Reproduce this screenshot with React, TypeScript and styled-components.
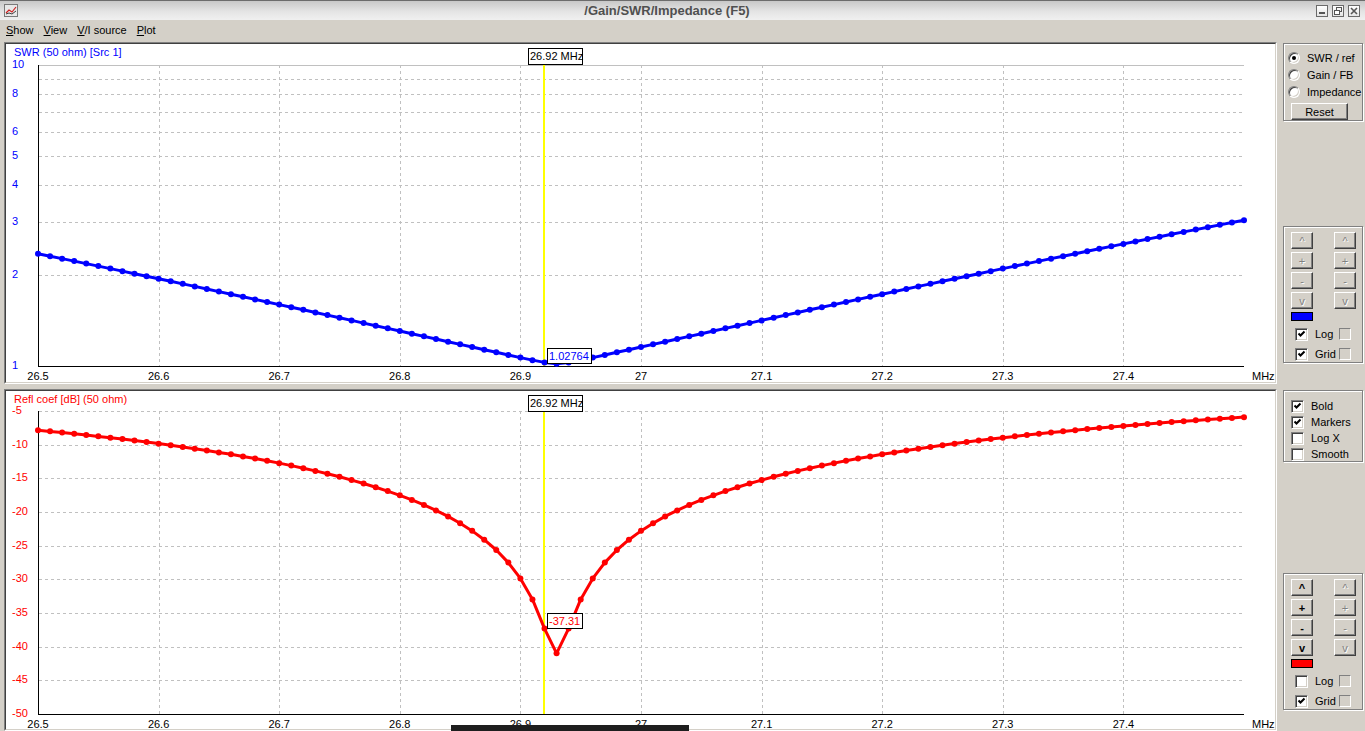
import React from 'react';
import styled, { createGlobalStyle } from 'styled-components';

const GlobalStyle = createGlobalStyle`
  html, body { margin: 0; padding: 0; background: #d4d0c8; }
  body { font-family: "Liberation Sans", Arial, sans-serif; font-size: 11px; overflow: hidden; }
  #root { width: 1365px; height: 731px; }
`;

const FONT = '"Liberation Sans", Arial, sans-serif';

/* ---------- data ---------- */
const PLOT_L = 38;
const PLOT_R = 1244;
const PX_PER_MHZ = 1206;
const xOf = (f: number) => PLOT_L + (f - 26.5) * PX_PER_MHZ;
const ySwr = (s: number) => 366 - 301 * Math.log10(s);
const yDb = (d: number) => 411 + (-5 - d) * (303 / 45);

const freqs = Array.from({ length: 101 }, (_, i) => 26.5 + i * 0.01);
const gammaOf = (f: number) => {
  const R = 50.9;
  const X = 103.9 * (f - 26.93);
  return Math.sqrt(((R - 50) ** 2 + X * X) / ((R + 50) ** 2 + X * X));
};
const swrPts = freqs.map((f) => {
  const g = gammaOf(f);
  return [xOf(f), ySwr((1 + g) / (1 - g))] as [number, number];
});
const dbPts = freqs.map((f) => [xOf(f), yDb(20 * Math.log10(gammaOf(f)))] as [number, number]);

const xTickLabels = ['26.5', '26.6', '26.7', '26.8', '26.9', '27', '27.1', '27.2', '27.3', '27.4'];
const xTickPos = xTickLabels.map((_, k) => PLOT_L + k * 120.6);

/* ---------- window chrome ---------- */
const Window = styled.div`
  width: 1365px;
  height: 731px;
  background: #d4d0c8;
  position: relative;
  overflow: hidden;
  display: flex;
  flex-direction: column;
`;

const TitleBar = styled.div`
  box-sizing: border-box;
  height: 20px;
  border-top: 1px solid #6c6c6c;
  background: linear-gradient(#c8c8c8, #e4e4e4 55%, #f0f0f0);
  display: flex;
  align-items: center;
  padding: 0 5px 0 4px;
`;

const TitleText = styled.div`
  flex: 1;
  text-align: center;
  font: bold 13px ${FONT};
  color: #505050;
`;

const WinButtons = styled.div`
  display: flex;
  gap: 4px;
`;

const WinButton = styled.div`
  box-sizing: border-box;
  width: 12px;
  height: 12px;
  border: 1px solid #6a6a6a;
  background: linear-gradient(#ffffff, #e4e4e4);
  display: flex;
  align-items: center;
  justify-content: center;
`;

const MenuBar = styled.div`
  height: 20px;
  display: flex;
  align-items: center;
  padding-left: 1px;
`;

const MenuItem = styled.div`
  padding: 0 5px;
  font: 11px ${FONT};
  color: #000;
  u { text-decoration: underline; }
`;

const Main = styled.div`
  display: flex;
  gap: 6px;
  padding: 2px 0 0 4px;
`;

const LeftCol = styled.div`
  display: flex;
  flex-direction: column;
  gap: 5px;
`;

const PanelFrame = styled.div`
  box-sizing: border-box;
  width: 1273px;
  height: 342px;
  border: 1px solid;
  border-color: #808080 #ffffff #ffffff #808080;
`;

const PanelInner = styled.div`
  box-sizing: border-box;
  width: 100%;
  height: 100%;
  border: 1px solid;
  border-color: #404040 #d4d0c8 #d4d0c8 #404040;
  background: #ffffff;
  display: flex;
`;

const RightCol = styled.div`
  width: 80px;
  display: flex;
  flex-direction: column;
`;

const Group = styled.div<{ $mt: number; $h: number }>`
  box-sizing: border-box;
  width: 80px;
  height: ${(p) => p.$h}px;
  margin-top: ${(p) => p.$mt}px;
  border: 1px solid #808080;
  box-shadow: inset 1px 1px 0 #ffffff, 1px 1px 0 #ffffff;
`;

const RadioList = styled.div`
  display: flex;
  flex-direction: column;
  padding: 5px 0 0 4px;
`;

const RadioRow = styled.div`
  height: 17px;
  display: flex;
  align-items: center;
  gap: 7px;
  font: 11px ${FONT};
`;

const RadioDot = styled.span<{ $on?: boolean }>`
  box-sizing: border-box;
  width: 12px;
  height: 12px;
  border-radius: 50%;
  border: 1px solid;
  border-color: #808080 #ffffff #ffffff #808080;
  box-shadow: inset 1px 1px 0 #404040, inset -1px -1px 0 #d4d0c8;
  background: #ffffff;
  display: flex;
  align-items: center;
  justify-content: center;
  &::after {
    content: '';
    width: 4px;
    height: 4px;
    border-radius: 50%;
    background: ${(p) => (p.$on ? '#000' : 'transparent')};
  }
`;

const PushButton = styled.div`
  box-sizing: border-box;
  width: 57px;
  height: 17px;
  margin: 3px 0 0 7px;
  border: 1px solid;
  border-color: #ffffff #404040 #404040 #ffffff;
  box-shadow: inset -1px -1px 0 #808080;
  display: flex;
  align-items: center;
  justify-content: center;
  font: 11px ${FONT};
`;

const ButtonGrid = styled.div`
  display: grid;
  grid-template-columns: 22px 22px;
  column-gap: 21px;
  row-gap: 3px;
  padding: 5px 0 0 7px;
`;

const CtlButton = styled.div<{ $off?: boolean }>`
  box-sizing: border-box;
  width: 22px;
  height: 17px;
  border: 1px solid;
  border-color: #ffffff #404040 #404040 #ffffff;
  box-shadow: inset -1px -1px 0 #808080;
  display: flex;
  align-items: center;
  justify-content: center;
  font: ${(p) => (p.$off ? 'normal' : 'bold')} 11px ${FONT};
  color: ${(p) => (p.$off ? '#808080' : '#000')};
  text-shadow: ${(p) => (p.$off ? '1px 1px 0 #ffffff' : 'none')};
`;

const Swatch = styled.div<{ $c: string }>`
  box-sizing: border-box;
  width: 22px;
  height: 9px;
  margin: 3px 0 0 7px;
  border: 1px solid #000;
  background: ${(p) => p.$c};
`;

const CheckRows = styled.div<{ $pt: number; $pl: number; $h: number }>`
  display: flex;
  flex-direction: column;
  padding: ${(p) => p.$pt}px 0 0 ${(p) => p.$pl}px;
  & > div { height: ${(p) => p.$h}px; }
`;

const CheckRow = styled.div`
  display: flex;
  align-items: center;
  font: 11px ${FONT};
  position: relative;
`;

const Label = styled.span`
  margin-left: 7px;
`;

const BoxWrap = styled.span<{ $off?: boolean }>`
  box-sizing: border-box;
  width: 13px;
  height: 13px;
  border: 1px solid;
  border-color: #808080 #ffffff #ffffff #808080;
  box-shadow: ${(p) => (p.$off ? 'none' : 'inset 1px 1px 0 #404040, inset -1px -1px 0 #d4d0c8')};
  background: ${(p) => (p.$off ? '#d4d0c8' : '#ffffff')};
  display: flex;
  align-items: center;
  justify-content: center;
`;

const SideBox = styled(BoxWrap)`
  position: absolute;
  left: 44px;
  width: 12px;
  height: 12px;
`;

const Check = ({ on, off }: { on?: boolean; off?: boolean }) => (
  <BoxWrap $off={off}>
    {on && (
      <svg width="9" height="9" viewBox="0 0 9 9">
        <path d="M1.5 3.5 L3.5 5.5 L7.5 1.5" fill="none" stroke="#000" strokeWidth="2" />
      </svg>
    )}
  </BoxWrap>
);

const BottomBar = styled.div`
  position: absolute;
  left: 451px;
  top: 725px;
  width: 238px;
  height: 6px;
  background: #1e1e1e;
`;

/* ---------- chart ---------- */
type ChartProps = {
  innerTop: number;
  plotTop: number;
  plotBottom: number;
  title: string;
  titleY: number;
  color: string;
  hGrid: number[];
  yLabels: { y: number; t: string }[];
  pts: [number, number][];
  topSolid: boolean;
  freqBoxY: number;
  value: { x: number; y: number; w: number; t: string };
};

const Chart = (p: ChartProps) => {
  const line = p.pts.map(([x, y]) => `${x.toFixed(1)},${y.toFixed(1)}`).join(' ');
  const markerX = 544;
  return (
    <svg width="1269" height="338" viewBox={`6 ${p.innerTop} 1269 338`} style={{ display: 'block' }}>
      <g fontFamily={FONT} fontSize="11">
        <text x="14" y={p.titleY} fill={p.color}>{p.title}</text>
        {p.topSolid && (
          <line x1={PLOT_L} x2={PLOT_R} y1={p.plotTop + 0.5} y2={p.plotTop + 0.5} stroke="#c0c0c0" />
        )}
        {xTickPos.slice(1).map((x) => (
          <line key={x} x1={Math.round(x) + 0.5} x2={Math.round(x) + 0.5} y1={p.plotTop} y2={p.plotBottom}
            stroke="#c0c0c0" strokeDasharray="3 3" />
        ))}
        {p.hGrid.map((y) => (
          <line key={y} x1={PLOT_L + 1} x2={PLOT_R} y1={Math.round(y) + 0.5} y2={Math.round(y) + 0.5}
            stroke="#c0c0c0" strokeDasharray="3 3" />
        ))}
        <line x1={PLOT_L + 0.5} x2={PLOT_L + 0.5} y1={p.plotTop} y2={p.plotBottom + 1} stroke="#000" />
        <line x1={PLOT_L} x2={PLOT_R} y1={p.plotBottom + 0.5} y2={p.plotBottom + 0.5} stroke="#000" />
        {p.yLabels.map((l) => (
          <text key={l.t} x="12" y={l.y + 3} fill={p.color}>{l.t}</text>
        ))}
        {xTickLabels.map((t, k) => (
          <text key={t} x={xTickPos[k]} y={p.plotBottom + 14} textAnchor="middle" fill="#000">{t}</text>
        ))}
        <text x="1252" y={p.plotBottom + 14} fill="#000">MHz</text>

        <rect x={markerX - 1} y={p.freqBoxY + 16} width="2" height={p.plotBottom - p.freqBoxY - 16} fill="#ffff00" />

        <polyline points={line} fill="none" stroke={p.color} strokeWidth="3" strokeLinejoin="round" />
        {p.pts.map(([x, y], i) => (
          <circle key={i} cx={x} cy={y} r="3" fill={p.color} />
        ))}

        <rect x="528.5" y={p.freqBoxY + 0.5} width="54" height="16" fill="#fff" stroke="#000" />
        <text x="530" y={p.freqBoxY + 12} fill="#000">26.92 MHz</text>

        <rect x={p.value.x + 0.5} y={p.value.y + 0.5} width={p.value.w} height="15" fill="#fff" stroke="#000" />
        <text x={p.value.x + 2} y={p.value.y + 12} fill={p.color}>{p.value.t}</text>
      </g>
    </svg>
  );
};

const swrGrid = [2, 3, 4, 5, 6, 7, 8, 9].map(ySwr);
const swrLabels = [10, 8, 6, 5, 4, 3, 2, 1].map((v) => ({ y: ySwr(v), t: String(v) }));
const dbGrid = [-5, -10, -15, -20, -25, -30, -35, -40, -45].map(yDb);
const dbLabels = [-5, -10, -15, -20, -25, -30, -35, -40, -45, -50].map((v) => ({ y: yDb(v), t: String(v) }));

const CtlGroup = ({ mt, color, enabledLeft, logOn }: { mt: number; color: string; enabledLeft: boolean; logOn: boolean }) => (
  <Group $mt={mt} $h={137}>
    <ButtonGrid>
      {['^', '+', '-', 'v'].map((g) => (
        <React.Fragment key={g}>
          <CtlButton $off={!enabledLeft}>{g}</CtlButton>
          <CtlButton $off>{g}</CtlButton>
        </React.Fragment>
      ))}
    </ButtonGrid>
    <Swatch $c={color} />
    <CheckRows $pt={3} $pl={11} $h={20}>
      <CheckRow>
        <Check on={logOn} />
        <Label>Log</Label>
        <SideBox $off />
      </CheckRow>
      <CheckRow>
        <Check on />
        <Label>Grid</Label>
        <SideBox $off />
      </CheckRow>
    </CheckRows>
  </Group>
);

export default function App() {
  return (
    <Window>
      <GlobalStyle />
      <TitleBar>
        <svg width="14" height="13" viewBox="0 0 14 13">
          <rect x="0.5" y="0.5" width="13" height="12" fill="#e8e8e8" stroke="#7a7a7a" />
          <polyline points="2,9 5,6 8,8 12,3" fill="none" stroke="#d02020" strokeWidth="1.2" />
          <polyline points="2,10 5,9 8,10 12,7" fill="none" stroke="#404040" strokeWidth="1" />
        </svg>
        <TitleText>/Gain/SWR/Impedance (F5)</TitleText>
        <WinButtons>
          <WinButton>
            <svg width="8" height="8" viewBox="0 0 8 8"><rect x="1" y="5" width="6" height="2" fill="#555" /></svg>
          </WinButton>
          <WinButton>
            <svg width="8" height="8" viewBox="0 0 8 8">
              <rect x="2.5" y="0.5" width="5" height="4" fill="none" stroke="#555" />
              <rect x="0.5" y="3.5" width="5" height="4" fill="#fff" stroke="#555" />
            </svg>
          </WinButton>
          <WinButton>
            <svg width="8" height="8" viewBox="0 0 8 8">
              <path d="M1 1 L7 7 M7 1 L1 7" stroke="#555" strokeWidth="1.6" />
            </svg>
          </WinButton>
        </WinButtons>
      </TitleBar>
      <MenuBar>
        <MenuItem><u>S</u>how</MenuItem>
        <MenuItem><u>V</u>iew</MenuItem>
        <MenuItem><u>V</u>/I source</MenuItem>
        <MenuItem><u>P</u>lot</MenuItem>
      </MenuBar>
      <Main>
        <LeftCol>
          <PanelFrame>
            <PanelInner>
              <Chart
                innerTop={44}
                plotTop={65}
                plotBottom={366}
                title="SWR (50 ohm) [Src 1]"
                titleY={56}
                color="#0000ff"
                hGrid={swrGrid}
                yLabels={swrLabels}
                pts={swrPts}
                topSolid
                freqBoxY={48}
                value={{ x: 547, y: 348, w: 44, t: '1.02764' }}
              />
            </PanelInner>
          </PanelFrame>
          <PanelFrame>
            <PanelInner>
              <Chart
                innerTop={391}
                plotTop={411}
                plotBottom={714}
                title="Refl coef [dB] (50 ohm)"
                titleY={403}
                color="#ff0000"
                hGrid={dbGrid}
                yLabels={dbLabels}
                pts={dbPts}
                topSolid={false}
                freqBoxY={395}
                value={{ x: 547, y: 613, w: 35, t: '-37.31' }}
              />
            </PanelInner>
          </PanelFrame>
        </LeftCol>
        <RightCol>
          <Group $mt={1} $h={78}>
            <RadioList>
              <RadioRow><RadioDot $on />SWR / ref</RadioRow>
              <RadioRow><RadioDot />Gain / FB</RadioRow>
              <RadioRow><RadioDot />Impedance</RadioRow>
            </RadioList>
            <PushButton>Reset</PushButton>
          </Group>
          <CtlGroup mt={105} color="#0000ff" enabledLeft={false} logOn />
          <Group $mt={27} $h={72}>
            <CheckRows $pt={7} $pl={7} $h={16}>
              <CheckRow><Check on /><Label>Bold</Label></CheckRow>
              <CheckRow><Check on /><Label>Markers</Label></CheckRow>
              <CheckRow><Check /><Label>Log X</Label></CheckRow>
              <CheckRow><Check /><Label>Smooth</Label></CheckRow>
            </CheckRows>
          </Group>
          <CtlGroup mt={111} color="#ff0000" enabledLeft logOn={false} />
        </RightCol>
      </Main>
      <BottomBar />
    </Window>
  );
}
